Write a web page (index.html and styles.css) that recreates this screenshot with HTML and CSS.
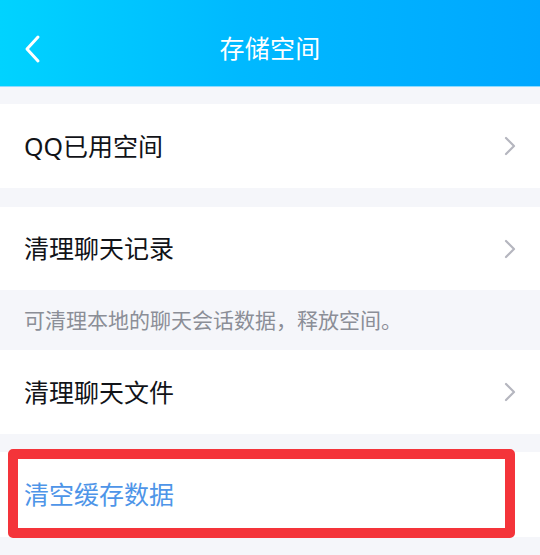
FILE: index.html
```html
<!DOCTYPE html>
<html lang="zh-CN">
<head>
<meta charset="utf-8">
<title>存储空间</title>
<link rel="stylesheet" href="styles.css">
</head>
<body>
<header class="topbar">
  <span class="back">
    <svg width="20" height="30" viewBox="0 0 20 30"><polyline points="15,3 4,15 15,27" fill="none" stroke="#ffffff" stroke-width="3" stroke-linecap="round" stroke-linejoin="round"/></svg>
  </span>
  <h1 class="title">存储空间</h1>
</header>
<main class="content">
  <div class="row row-first">
    <span class="label">QQ已用空间</span>
    <svg class="chev" width="12" height="20" viewBox="0 0 12 20"><polyline points="2,2 10,10 2,18" fill="none" stroke="#b5b6bf" stroke-width="2.2" stroke-linecap="round" stroke-linejoin="round"/></svg>
  </div>
  <div class="row row-second">
    <span class="label">清理聊天记录</span>
    <svg class="chev" width="12" height="20" viewBox="0 0 12 20"><polyline points="2,2 10,10 2,18" fill="none" stroke="#b5b6bf" stroke-width="2.2" stroke-linecap="round" stroke-linejoin="round"/></svg>
  </div>
  <p class="note">可清理本地的聊天会话数据，释放空间。</p>
  <div class="row row-third">
    <span class="label">清理聊天文件</span>
    <svg class="chev" width="12" height="20" viewBox="0 0 12 20"><polyline points="2,2 10,10 2,18" fill="none" stroke="#b5b6bf" stroke-width="2.2" stroke-linecap="round" stroke-linejoin="round"/></svg>
  </div>
  <div class="row row-fourth">
    <span class="label label-blue">清空缓存数据</span>
    <span class="highlight"></span>
  </div>
</main>
</body>
</html>
```
FILE: styles.css
```css
* { box-sizing: border-box; }
html, body {
  margin: 0;
  padding: 0;
}
body {
  width: 540px;
  height: 555px;
  overflow: hidden;
  background: #f5f6fa;
  font-family: "Noto Sans", "Noto Sans CJK SC", sans-serif;
}
.topbar {
  height: 87px;
  display: flex;
  align-items: center;
  justify-content: center;
  position: relative;
  background: linear-gradient(90deg, #00d3ff 0%, #00b9ff 45%, #00a7ff 100%);
  border-bottom: 1px solid #8fdbff;
  padding-top: 10px;
}
.back {
  position: absolute;
  left: 23px;
  top: 34px;
  width: 20px;
  height: 30px;
  display: block;
}
.back svg { display: block; }
.title {
  margin: 0;
  font-size: 25px;
  font-weight: 400;
  color: #ffffff;
  line-height: 1;
  letter-spacing: 0.3px;
}
.content {
  display: flex;
  flex-direction: column;
  padding-top: 17px;
}
.row {
  background: #ffffff;
  display: flex;
  align-items: center;
  justify-content: space-between;
  padding: 0 24px 0 24px;
  position: relative;
}
.row-first { height: 84px; }
.row-second { height: 83px; margin-top: 19px; }
.row-third { height: 84px; }
.row-fourth { height: 85px; margin-top: 18px; }
.label {
  font-size: 25px;
  color: #111318;
  line-height: 1;
}
.label-blue { color: #4e95e8; }
.chev {
  display: block;
  margin-right: 0;
}
.note {
  margin: 0;
  height: 60px;
  display: flex;
  align-items: center;
  padding: 0 24px;
  font-size: 21px;
  color: #8b8e97;
  line-height: 1;
}
.highlight {
  position: absolute;
  left: 8px;
  top: -3px;
  width: 507px;
  height: 89px;
  border: 10px solid #f4343a;
  border-radius: 5px;
  pointer-events: none;
}
```
